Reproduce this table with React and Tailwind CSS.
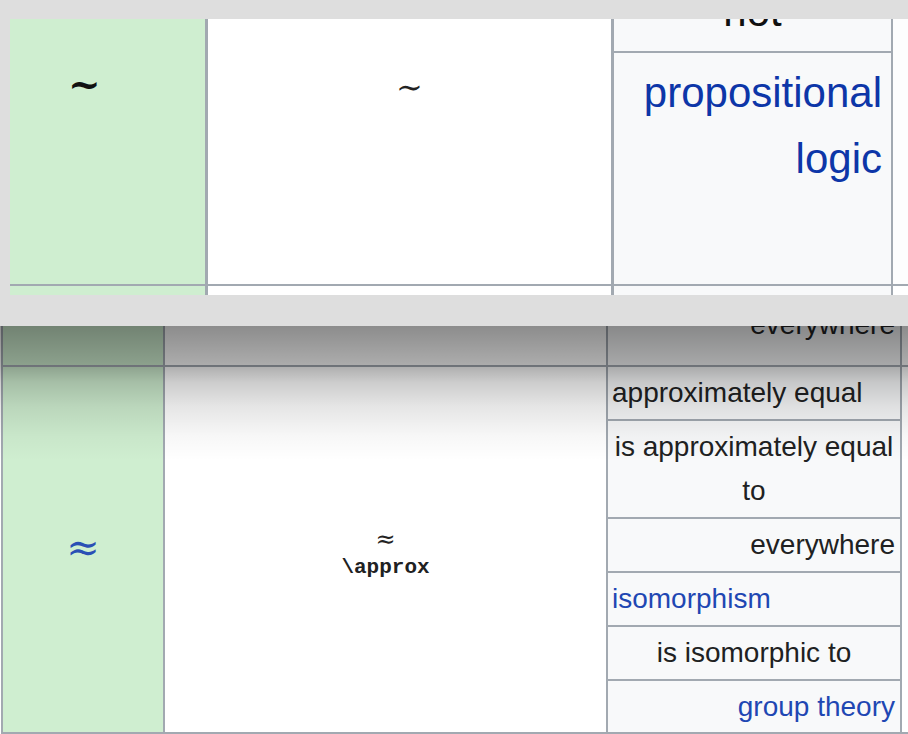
import React from "react";

const LINE = "border-[#a2a9b1]";
const LINK = "text-[#1f47b3]";

function ZoomPanel() {
  return (
    <div className="h-[326px] bg-[#dedede] pt-[19px] pl-[10px]">
      <div className="flex h-[276px] flex-col overflow-hidden bg-white">
        {/* magnified row */}
        <div className="flex h-[265px]">
          <div className={`w-[198px] border-r-[3px] ${LINE} bg-[#cfeed0] pl-[58px] pt-[45px]`}>
            <span className="font-['DejaVu_Serif',serif] text-[39px] font-bold leading-[40px] text-[#111]">~</span>
          </div>
          <div className={`w-[406px] border-r-[3px] ${LINE} pt-[48px] text-center`}>
            <span className="font-['DejaVu_Serif',serif] text-[32px] leading-[40px] text-[#222]">∼</span>
          </div>
          <div className={`flex w-[279px] flex-col border-r-2 ${LINE} bg-[#f8f9fa] text-[42px] leading-[66px]`}>
            <div className={`h-[34px] overflow-hidden border-b-2 ${LINE} text-center`}>
              <div className="mt-[-40px] text-[#111]">not</div>
            </div>
            <div className="flex-1 pt-[7px] pr-[9px] text-right text-[#0d36a8]">
              propositional
              <br />
              logic
            </div>
          </div>
          <div className="flex-1 bg-[#fdfdfd]" />
        </div>
        <div className="h-[2px] bg-[#a2a9b1]" />
        <div className="flex flex-1">
          <div className={`w-[198px] border-r-[3px] ${LINE} bg-[#cfeed0]`} />
          <div className={`w-[406px] border-r-[3px] ${LINE}`} />
          <div className={`w-[279px] border-r-2 ${LINE} bg-[#f8f9fa]`} />
          <div className="flex-1" />
        </div>
      </div>
    </div>
  );
}

function SubCell({ align, link, height, children, last }) {
  const just =
    align === "left" ? "justify-start pl-[4px]" : align === "right" ? "justify-end pr-[5px]" : "justify-center";
  return (
    <div
      className={`flex ${height} items-center ${just} ${last ? "" : `border-b-2 ${LINE}`} ${link ? LINK : ""}`}
    >
      {children}
    </div>
  );
}

function LowerTable() {
  return (
    <div className="pl-[1px]">
      <div className={`flex h-[408px] flex-col border-l-2 ${LINE} text-[28px] leading-[44px]`}>
        {/* tail of the previous row */}
        <div className={`flex h-[41px] border-b-2 ${LINE}`}>
          <div className={`w-[162px] border-r-2 ${LINE} bg-[#cfeed0]`} />
          <div className={`w-[443px] border-r-2 ${LINE}`} />
          <div className={`w-[294px] overflow-hidden border-r-2 ${LINE} bg-[#f8f9fa] pr-[5px] text-right`}>
            <div className="mt-[-23px]">everywhere</div>
          </div>
          <div className="flex-1" />
        </div>

        {/* ≈ row */}
        <div className={`flex h-[367px] border-b-2 ${LINE}`}>
          <div className={`flex w-[162px] items-center justify-center border-r-2 ${LINE} bg-[#cfeed0] pb-[6px]`}>
            <a className="font-['DejaVu_Serif',serif] text-[40px] leading-[44px] text-[#2a4fb5]">≈</a>
          </div>
          <div className={`flex w-[443px] flex-col items-center justify-center border-r-2 ${LINE} pt-[6px]`}>
            <div className="font-['DejaVu_Serif',serif] text-[24px] leading-[30px] text-[#222]">≈</div>
            <div className="font-['Liberation_Mono',monospace] text-[21px] font-bold leading-[28px] text-[#202122]">
              \approx
            </div>
          </div>
          <div className={`flex w-[294px] flex-col border-r-2 ${LINE} bg-[#f8f9fa]`}>
            <SubCell align="left" height="h-[54px]">approximately equal</SubCell>
            <div className={`h-[98px] border-b-2 ${LINE} px-[4px] pt-[4px] text-center`}>
              is approximately equal to
            </div>
            <SubCell align="right" height="h-[54px]">everywhere</SubCell>
            <SubCell align="left" height="h-[54px]" link>
              isomorphism
            </SubCell>
            <SubCell align="center" height="h-[54px]">is isomorphic to</SubCell>
            <SubCell align="right" height="h-[51px]" link last>
              group theory
            </SubCell>
          </div>
          <div className="flex-1" />
        </div>
      </div>
    </div>
  );
}

export default function App() {
  return (
    <div className="relative h-[734px] w-[908px] overflow-hidden bg-white font-['Liberation_Sans',Arial,sans-serif] text-[#202122]">
      <ZoomPanel />
      <LowerTable />
      {/* shadow cast by the magnifier panel */}
      <div className="pointer-events-none absolute left-0 right-0 top-[326px] h-[140px] bg-[linear-gradient(to_bottom,rgba(0,0,0,0.45)_0px,rgba(0,0,0,0.32)_40px,rgba(0,0,0,0.2)_56px,rgba(0,0,0,0.1)_80px,rgba(0,0,0,0.03)_110px,rgba(0,0,0,0)_135px)]" />
    </div>
  );
}
